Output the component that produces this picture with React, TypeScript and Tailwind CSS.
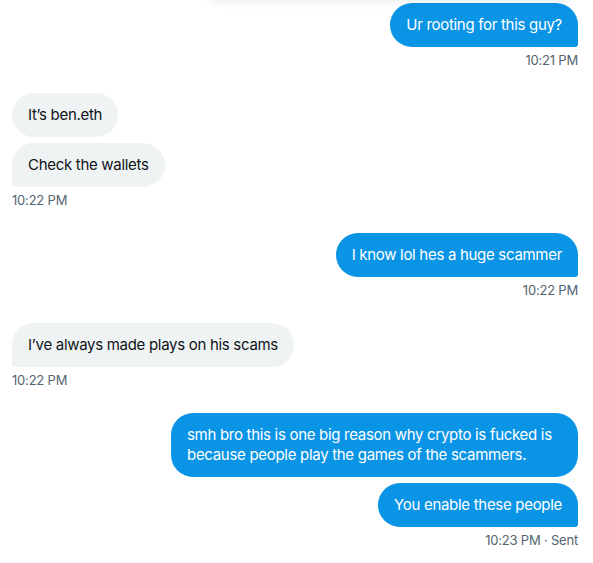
const messages = [
  { side: 'right', lines: ['Ur rooting for this guy?'], time: '10:21 PM' },
  { side: 'left', lines: ['It’s ben.eth', 'Check the wallets'], time: '10:22 PM' },
  { side: 'right', lines: ['I know lol hes a huge scammer'], time: '10:22 PM' },
  { side: 'left', lines: ['I’ve always made plays on his scams'], time: '10:22 PM' },
  {
    side: 'right',
    lines: [
      'smh bro this is one big reason why crypto is fucked is because people play the games of the scammers.',
      'You enable these people',
    ],
    time: '10:23 PM · Sent',
  },
];

function Bubble({ text, mine, last }: { text: string; mine: boolean; last: boolean }) {
  const base =
    'max-w-[407px] px-4 py-3 text-[15px] leading-5 tracking-[-0.3px] rounded-[22px]';
  const color = mine ? 'bg-[#0a94e6] text-white' : 'bg-[#eff3f4] text-[#0f1419]';
  const corner = last ? (mine ? 'rounded-br-[3px]' : 'rounded-bl-[3px]') : '';
  return <div className={`${base} ${color} ${corner}`}>{text}</div>;
}

export default function App() {
  return (
    <div className="relative h-[563px] w-[593px] overflow-hidden bg-white font-['Inter',sans-serif]">
      {/* bottom edge of a floating card above the thread */}
      <div className="absolute -top-10 left-[205px] h-10 w-[370px] rounded-2xl bg-white shadow-[0_2px_10px_rgba(0,0,0,0.08)]" />

      <div className="flex flex-col gap-[25px] pl-3 pr-[15px] pt-[3px]">
        {messages.map((m, i) => {
          const mine = m.side === 'right';
          return (
            <div key={i} className={`flex flex-col ${mine ? 'items-end' : 'items-start'}`}>
              <div className={`flex flex-col gap-[6px] ${mine ? 'items-end' : 'items-start'}`}>
                {m.lines.map((line, j) => (
                  <Bubble key={j} text={line} mine={mine} last={j === m.lines.length - 1} />
                ))}
              </div>
              <div className="mt-[5px] text-[13px] leading-4 tracking-[-0.2px] text-[#536471]">{m.time}</div>
            </div>
          );
        })}
      </div>
    </div>
  );
}
